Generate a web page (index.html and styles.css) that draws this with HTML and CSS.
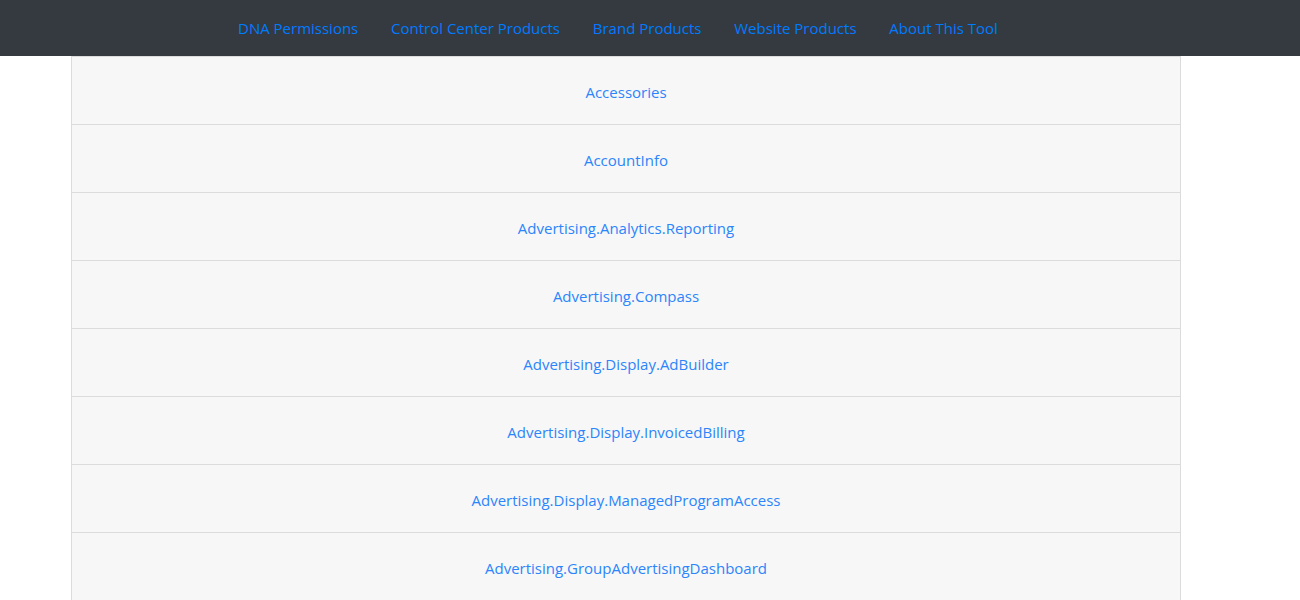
FILE: index.html
```html
<!DOCTYPE html>
<html>
<head>
<meta charset="utf-8">
<link rel="stylesheet" href="styles.css">
</head>
<body>
<nav class="navbar">
  <a class="nav-link" href="#">DNA Permissions</a>
  <a class="nav-link" href="#">Control Center Products</a>
  <a class="nav-link" href="#">Brand Products</a>
  <a class="nav-link" href="#">Website Products</a>
  <a class="nav-link" href="#">About This Tool</a>
</nav>
<ul class="list">
  <li class="item"><a href="#">Accessories</a></li>
  <li class="item"><a href="#">AccountInfo</a></li>
  <li class="item"><a href="#">Advertising.Analytics.Reporting</a></li>
  <li class="item"><a href="#">Advertising.Compass</a></li>
  <li class="item"><a href="#">Advertising.Display.AdBuilder</a></li>
  <li class="item"><a href="#">Advertising.Display.InvoicedBilling</a></li>
  <li class="item"><a href="#">Advertising.Display.ManagedProgramAccess</a></li>
  <li class="item"><a href="#">Advertising.GroupAdvertisingDashboard</a></li>
</ul>
</body>
</html>
```
FILE: styles.css
```css
html, body {
  margin: 0;
  padding: 0;
  background: #fff;
  font-family: "Open Sans", "Noto Sans", sans-serif;
  font-size: 15px;
  overflow: hidden;
}
.navbar {
  height: 56px;
  background: #343a40;
  display: flex;
  align-items: center;
  padding-left: 222px;
  box-sizing: border-box;
}
.nav-link {
  color: #007bff;
  text-decoration: none;
  padding: 0 16.4px;
  line-height: 24px;
}
.nav-link:first-child {
  padding-left: 16px;
}
.list {
  list-style: none;
  margin: 0 0 0 71px;
  padding: 0;
  width: 1110px;
  border: 1px solid #dcdcdc;
  border-bottom: none;
  box-sizing: border-box;
}
.item {
  height: 68px;
  box-sizing: border-box;
  border-bottom: 1px solid #dcdcdc;
  background: #f7f7f7;
  display: flex;
  align-items: center;
  justify-content: center;
  padding-top: 3px;
}
.item a {
  color: #2b85fb;
  text-decoration: none;
  line-height: 24px;
}
```
